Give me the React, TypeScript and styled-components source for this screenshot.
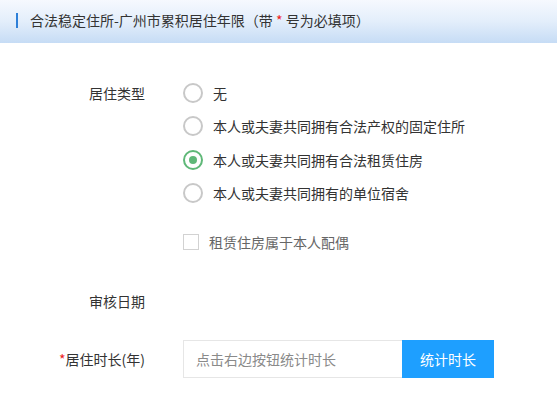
import styled, { createGlobalStyle } from "styled-components";

const GlobalStyle = createGlobalStyle`
  html, body {
    margin: 0;
    padding: 0;
    background: #fff;
  }
  body {
    font-family: "Noto Sans CJK SC", "Noto Sans", sans-serif;
    font-size: 14px;
    color: #333;
  }
`;

const Page = styled.div`
  width: 557px;
  min-height: 396px;
  background: #fff;
`;

const Header = styled.div`
  height: 43px;
  display: flex;
  align-items: center;
  padding: 0 0 3px 16px;
  box-sizing: border-box;
  background: linear-gradient(to bottom, #f6f9fe 0%, #e3eefb 50%, #c6dcf5 100%);
`;

const HeaderBar = styled.span`
  width: 2px;
  height: 15px;
  background: #2d7fd8;
`;

const HeaderTitle = styled.span`
  margin-left: 12px;
  font-size: 14px;
  line-height: 20px;
  color: #333;
`;

const Star = styled.span`
  color: #e22;
`;

const Form = styled.div`
  padding-top: 33px;
`;

const Field = styled.div<{ $gap?: number }>`
  display: grid;
  grid-template-columns: 145px 1fr;
  column-gap: 38px;
  align-items: start;
  margin-top: ${({ $gap }) => $gap ?? 0}px;
`;

const Label = styled.div<{ $h?: number }>`
  text-align: right;
  line-height: ${({ $h }) => $h ?? 20}px;
  height: ${({ $h }) => $h ?? 20}px;
  white-space: nowrap;
  color: #333;
`;

const LabelInOption = styled(Label)`
  padding-top: 6.75px;
`;

const RadioList = styled.div`
  display: flex;
  flex-direction: column;
`;

const RadioOption = styled.label`
  display: flex;
  align-items: center;
  height: 33.5px;
  cursor: pointer;
`;

const RadioCircle = styled.span<{ $checked?: boolean }>`
  width: 20px;
  height: 20px;
  box-sizing: border-box;
  border-radius: 50%;
  border: 2px solid ${({ $checked }) => ($checked ? "#5fb878" : "#c8c8c8")};
  display: flex;
  align-items: center;
  justify-content: center;
  flex-shrink: 0;

  &::after {
    content: "";
    width: 8px;
    height: 8px;
    border-radius: 50%;
    background: #5fb878;
    display: ${({ $checked }) => ($checked ? "block" : "none")};
  }
`;

const OptionText = styled.span`
  margin-left: 10px;
  line-height: 20px;
  color: #333;
`;

const CheckRow = styled.label`
  display: flex;
  align-items: center;
  height: 20px;
  margin-top: 22px;
  cursor: pointer;
`;

const CheckBox = styled.span`
  width: 16px;
  height: 16px;
  box-sizing: border-box;
  border: 1px solid #d2d2d2;
  background: #fff;
`;

const CheckText = styled.span`
  margin-left: 10px;
  color: #666;
  line-height: 20px;
`;

const InputGroup = styled.div`
  display: flex;
  width: 311px;
  height: 38px;
`;

const TextInput = styled.input`
  flex: 1;
  min-width: 0;
  height: 38px;
  box-sizing: border-box;
  border: 1px solid #e6e6e6;
  border-right: none;
  padding: 0 12px;
  font-family: inherit;
  font-size: 14px;
  color: #333;
  outline: none;

  &::placeholder {
    color: #8a8a8a;
  }
`;

const Button = styled.button`
  width: 92px;
  height: 38px;
  border: none;
  background: #1e9fff;
  color: #fff;
  font-family: inherit;
  font-size: 14px;
  cursor: pointer;
`;

const options = [
  "无",
  "本人或夫妻共同拥有合法产权的固定住所",
  "本人或夫妻共同拥有合法租赁住房",
  "本人或夫妻共同拥有的单位宿舍",
];

export default function App() {
  const checked = 2;
  return (
    <Page>
      <GlobalStyle />
      <Header>
        <HeaderBar />
        <HeaderTitle>
          合法稳定住所-广州市累积居住年限（带 <Star>*</Star> 号为必填项）
        </HeaderTitle>
      </Header>
      <Form>
        <Field>
          <LabelInOption>居住类型</LabelInOption>
          <div>
            <RadioList>
              {options.map((o, i) => (
                <RadioOption key={o}>
                  <RadioCircle $checked={i === checked} />
                  <OptionText>{o}</OptionText>
                </RadioOption>
              ))}
            </RadioList>
            <CheckRow>
              <CheckBox />
              <CheckText>租赁住房属于本人配偶</CheckText>
            </CheckRow>
          </div>
        </Field>
        <Field $gap={39}>
          <Label>审核日期</Label>
          <div />
        </Field>
        <Field $gap={29}>
          <Label $h={38}>
            <Star>*</Star>居住时长(年)
          </Label>
          <InputGroup>
            <TextInput placeholder="点击右边按钮统计时长" />
            <Button>统计时长</Button>
          </InputGroup>
        </Field>
      </Form>
    </Page>
  );
}
